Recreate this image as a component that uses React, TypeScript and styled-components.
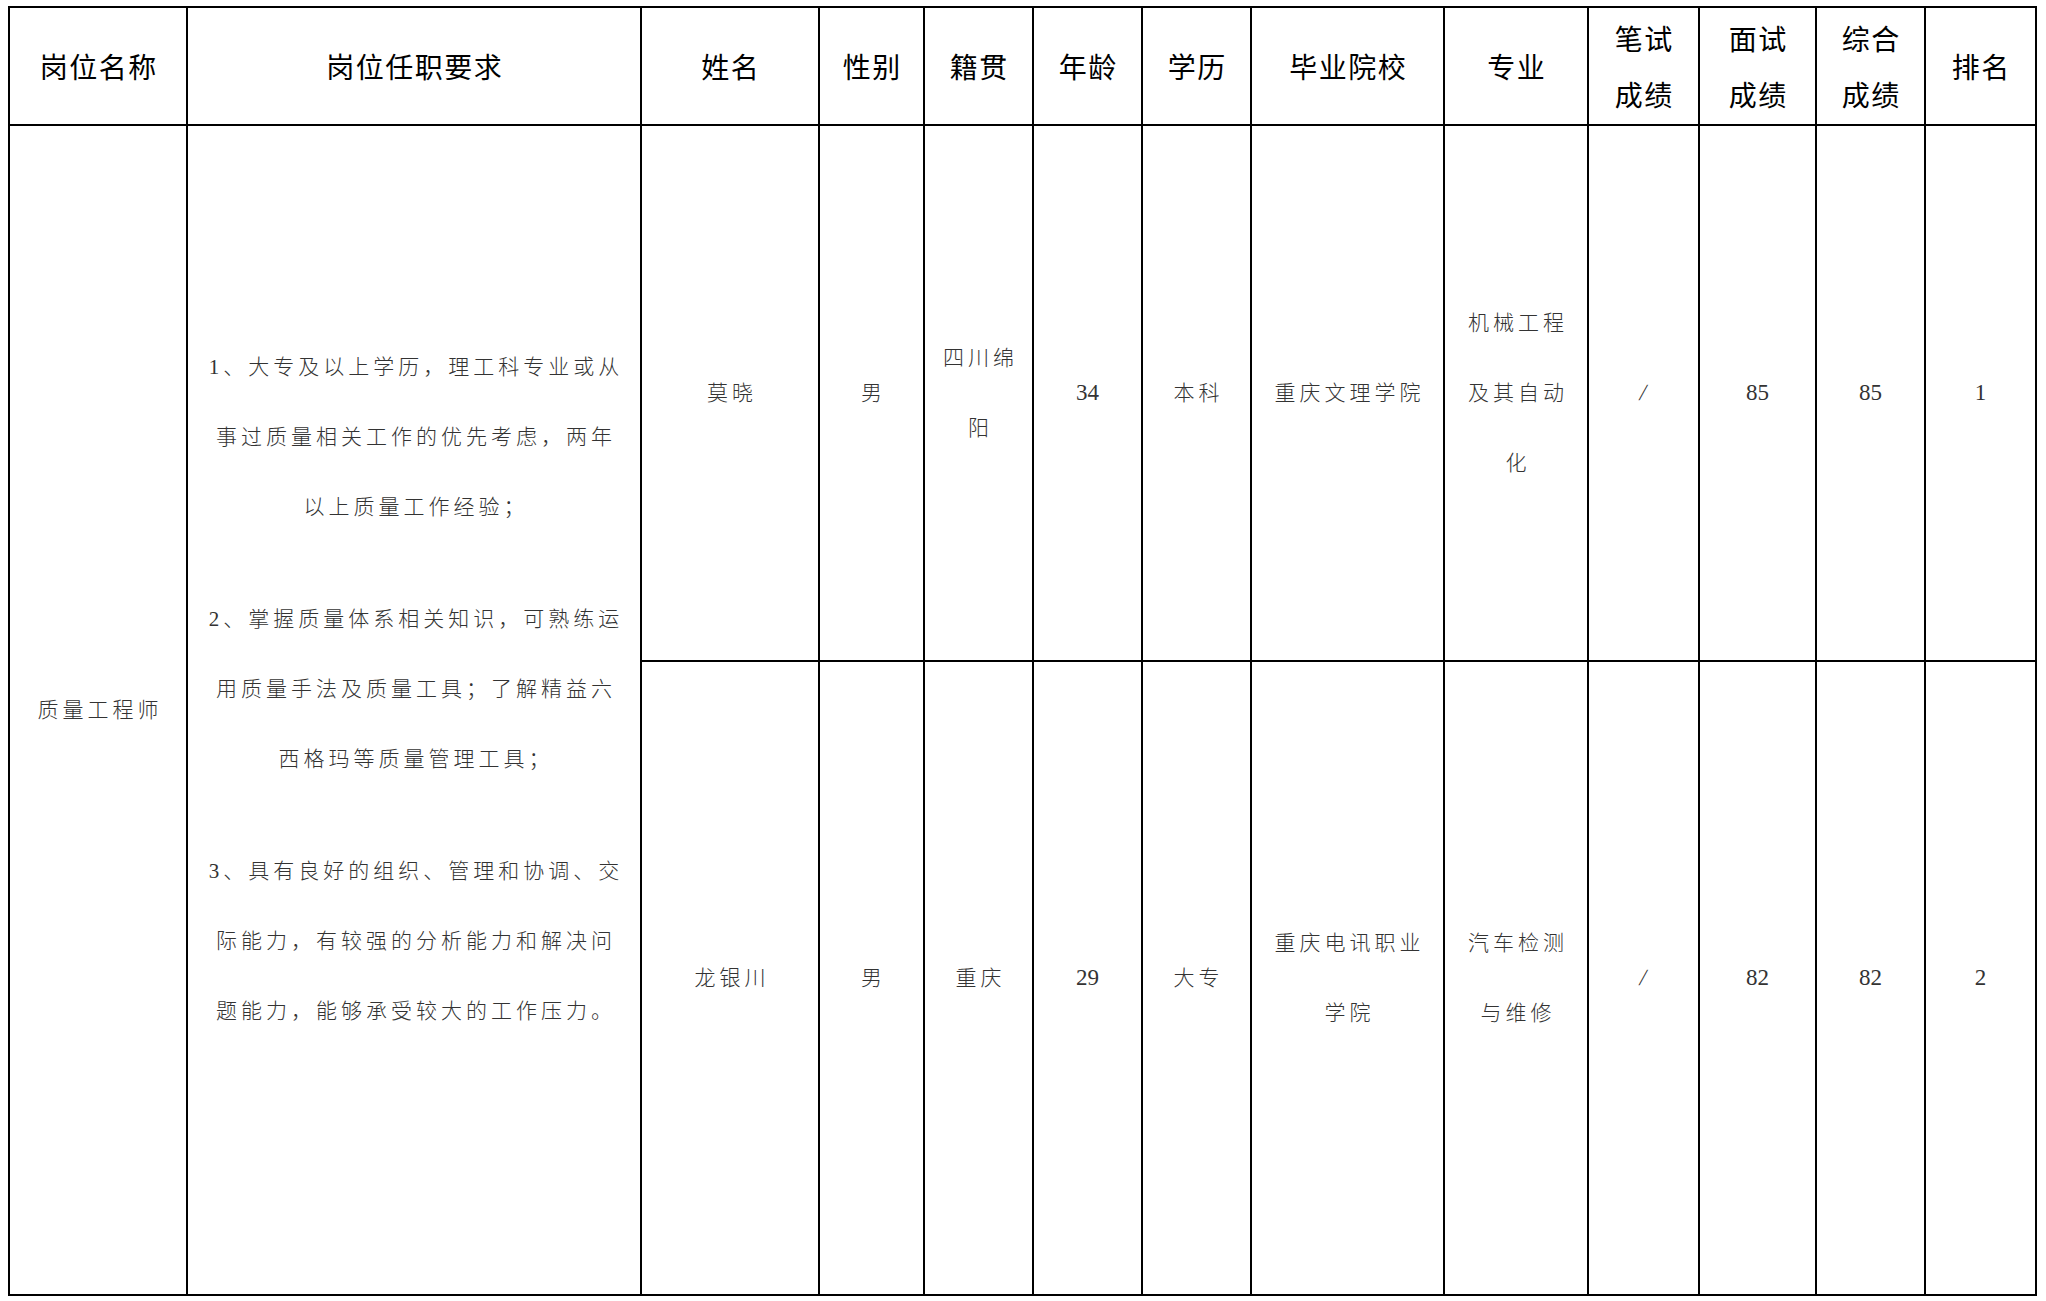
import React from "react";
import styled, { createGlobalStyle } from "styled-components";

const Global = createGlobalStyle`
  html, body { margin: 0; padding: 0; background: #fff; }
  body { font-family: "Liberation Serif", "Noto Sans CJK SC", serif; color: #000; }
`;

const Page = styled.div`
  padding: 6px 0 0 8px;
`;

const Grid = styled.div`
  display: grid;
  grid-template-columns: 178px 454px 178px 105px 109px 109px 109px 193px 144px 111px 117px 109px 111px;
  grid-template-rows: 118px 536px 634px;
  width: 2029px;
  box-sizing: border-box;
  border-top: 2px solid #000;
  border-left: 2px solid #000;
`;

const Cell = styled.div<{ $span?: number }>`
  box-sizing: border-box;
  border-right: 2px solid #000;
  border-bottom: 2px solid #000;
  display: flex;
  align-items: center;
  justify-content: center;
  text-align: center;
  grid-row: ${(p) => (p.$span ? `span ${p.$span}` : "auto")};
  min-width: 0;
`;

const HeadCell = styled(Cell)`
  font-family: "Noto Sans CJK SC", serif;
  font-size: 28px;
  font-weight: 400;
  letter-spacing: 1.5px;
  padding-left: 1.5px;
  line-height: 56px;
  color: #000;
`;

const BodyCell = styled(Cell)`
  font-family: "Liberation Serif", "Noto Sans CJK SC", serif;
  font-size: 21px;
  font-weight: 300;
  letter-spacing: 4px;
  padding-left: 4px;
  line-height: 70px;
  color: #333;
`;

const Num = styled.span`
  font-family: "Liberation Serif", serif;
  font-size: 23px;
  letter-spacing: 0;
  margin-right: 4px;
`;

const Slash = styled(Num)`
  display: inline-block;
  transform: skewX(-12deg);
`;

const Requirements = styled.div`
  display: flex;
  flex-direction: column;
`;

const Para = styled.p`
  margin: 0 0 42px 0;
`;

const headers: React.ReactNode[] = [
  "岗位名称",
  "岗位任职要求",
  "姓名",
  "性别",
  "籍贯",
  "年龄",
  "学历",
  "毕业院校",
  "专业",
  <>笔试<br />成绩</>,
  <>面试<br />成绩</>,
  <>综合<br />成绩</>,
  "排名",
];

type Person = {
  name: string;
  gender: string;
  origin: React.ReactNode;
  age: string;
  edu: string;
  school: React.ReactNode;
  major: React.ReactNode;
  written: string;
  interview: string;
  total: string;
  rank: string;
};

const people: Person[] = [
  {
    name: "莫晓",
    gender: "男",
    origin: <>四川绵<br />阳</>,
    age: "34",
    edu: "本科",
    school: "重庆文理学院",
    major: <>机械工程<br />及其自动<br />化</>,
    written: "/",
    interview: "85",
    total: "85",
    rank: "1",
  },
  {
    name: "龙银川",
    gender: "男",
    origin: "重庆",
    age: "29",
    edu: "大专",
    school: <>重庆电讯职业<br />学院</>,
    major: <>汽车检测<br />与维修</>,
    written: "/",
    interview: "82",
    total: "82",
    rank: "2",
  },
];

export default function App() {
  return (
    <>
      <Global />
      <Page>
        <Grid>
          {headers.map((h, i) => (
            <HeadCell key={i}>
              <div>{h}</div>
            </HeadCell>
          ))}
          <BodyCell $span={2}>质量工程师</BodyCell>
          <BodyCell $span={2}>
            <Requirements>
              <Para>
                1、大专及以上学历，理工科专业或从<br />
                事过质量相关工作的优先考虑，两年<br />
                以上质量工作经验；
              </Para>
              <Para>
                2、掌握质量体系相关知识，可熟练运<br />
                用质量手法及质量工具；了解精益六<br />
                西格玛等质量管理工具；
              </Para>
              <Para>
                3、具有良好的组织、管理和协调、交<br />
                际能力，有较强的分析能力和解决问<br />
                题能力，能够承受较大的工作压力。
              </Para>
            </Requirements>
          </BodyCell>
          {people.map((p) => (
            <React.Fragment key={p.name}>
              <BodyCell>{p.name}</BodyCell>
              <BodyCell>{p.gender}</BodyCell>
              <BodyCell><div>{p.origin}</div></BodyCell>
              <BodyCell><Num>{p.age}</Num></BodyCell>
              <BodyCell>{p.edu}</BodyCell>
              <BodyCell><div>{p.school}</div></BodyCell>
              <BodyCell><div>{p.major}</div></BodyCell>
              <BodyCell><Slash>{p.written}</Slash></BodyCell>
              <BodyCell><Num>{p.interview}</Num></BodyCell>
              <BodyCell><Num>{p.total}</Num></BodyCell>
              <BodyCell><Num>{p.rank}</Num></BodyCell>
            </React.Fragment>
          ))}
        </Grid>
      </Page>
    </>
  );
}
